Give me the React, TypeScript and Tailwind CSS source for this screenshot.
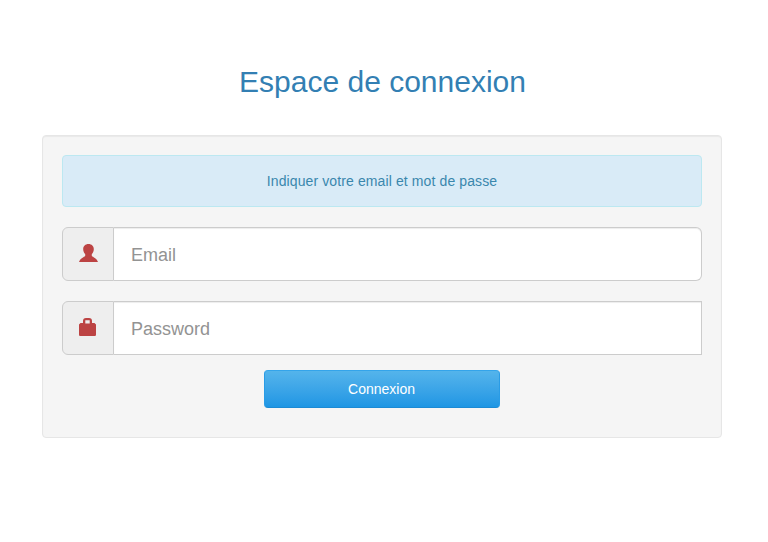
export default function App() {
  return (
    <div className="min-h-[542px] bg-white font-['Liberation_Sans',Arial,sans-serif] pt-[62px] px-[42px] w-[768px]">
      <h1 className="text-center text-[30px] leading-[40px] text-[#337fb3] font-normal mb-[33px] pr-[3px]">Espace de connexion</h1>
      <div className="w-[680px] h-[303px] bg-[#f5f5f5] border border-[#e6e6e6] rounded-[4px] shadow-[inset_0_1px_1px_rgba(0,0,0,0.05)] p-[19px]">
        <div className="h-[52px] flex items-center justify-center bg-[#d9ebf7] border border-[#bce8f1] rounded-[4px] text-[#3a87ad] text-[14px] tracking-[0.11px]">
          Indiquer votre email et mot de passe
        </div>
        <div className="mt-[20px] flex h-[54px]">
          <div className="w-[52px] shrink-0 bg-[#eeeeee] border border-[#cccccc] rounded-l-[6px] flex items-center justify-center">
            <svg width="19" height="18" viewBox="0 0 19 18" className="ml-[1px] mb-[2px]">
              <path d="M9.500 0C6.300 0 4.200 2.200 4.200 5.200c0 2 .9 3.800 2 4.900v2C5 13.200 1.300 14.300 0 18h19c-1.300-3.700-5-4.800-6.200-5.900v-2c1.100-1.100 2-2.900 2-4.900C14.800 2.200 12.700 0 9.500 0z" fill="#bc4343" />
            </svg>
          </div>
          <div className="flex-1 bg-white border border-l-0 border-[#cccccc] rounded-r-[6px] shadow-[inset_0_1px_1px_rgba(0,0,0,0.075)] flex items-center pl-[17px] pt-[2px] text-[18px] text-[#939393]">
            Email
          </div>
        </div>
        <div className="mt-[20px] flex h-[54px]">
          <div className="w-[52px] shrink-0 bg-[#eeeeee] border border-[#cccccc] rounded-l-[6px] flex items-center justify-center">
            <svg width="17" height="18" viewBox="0 0 17 18" className="mr-[1px] mb-[2px]">
              <path d="M4 5V3c0-2 1-3 3-3h3c2 0 3 1 3 3v2h2.500L17 6.500V16.500c0 1-.6 1.500-1.500 1.500h-14C.6 18 0 17.500 0 16.500V6.500L1.500 5zM6.300 5.500h4.400V2.300H6.300z" fill="#bc4343" fillRule="evenodd" />
            </svg>
          </div>
          <div className="flex-1 bg-white border border-l-0 border-[#cccccc] shadow-[inset_0_1px_1px_rgba(0,0,0,0.075)] flex items-center pl-[17px] pt-[2px] text-[18px] text-[#939393]">
            Password
          </div>
        </div>
        <div className="mt-[15px] flex justify-center pr-[1px]">
          <button className="w-[236px] h-[38px] rounded-[4px] border border-t-[#34a4ea] border-x-[#2a9ce6] border-b-[#1b8ad4] bg-gradient-to-b from-[#54b4eb] to-[#1d96e4] text-white text-[14px]">
            Connexion
          </button>
        </div>
      </div>
    </div>
  );
}
